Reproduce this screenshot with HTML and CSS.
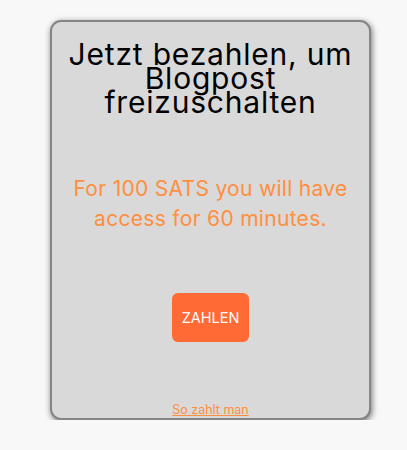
FILE: index.html
```html
<!DOCTYPE html>
<html lang="de">
<head>
<meta charset="utf-8">
<title>Paywall</title>
<link rel="stylesheet" href="styles.css">
</head>
<body>
  <div class="page">
    <div class="card">
      <h1 class="title">Jetzt bezahlen, um Blogpost freizuschalten</h1>
      <p class="offer">For 100 SATS you will have access for 60 minutes.</p>
      <button class="pay">ZAHLEN</button>
      <a class="howto" href="#">So zahlt man</a>
    </div>
  </div>
</body>
</html>
```

FILE: styles.css
```css
html, body {
  margin: 0;
  padding: 0;
  background: #f8f8f8;
}

.page {
  padding: 20px 0 0 50px;
}

.card {
  box-sizing: border-box;
  width: 321px;
  height: 400px;
  background: #d9d9d9;
  border: 2px solid #858585;
  border-radius: 11px;
  box-shadow: 1px 2px 6px rgba(0, 0, 0, 0.55);
  display: flex;
  flex-direction: column;
  align-items: center;
  text-align: center;
  padding: 0 8px;
}

.title {
  margin: 20px 0 0;
  font-family: "Inter", "Noto Sans", sans-serif;
  font-weight: 400;
  font-size: 30px;
  letter-spacing: 0.8px;
  line-height: 24px;
  color: #000;
}

.offer {
  margin: 60px 0 0;
  font-family: "Inter", "Noto Sans", sans-serif;
  font-size: 21px;
  letter-spacing: 0.3px;
  line-height: 30px;
  color: #ff8f40;
}

.pay {
  margin-top: 59px;
  width: 77px;
  height: 49px;
  border: none;
  border-radius: 6px;
  background: #ff6a35;
  color: #fff;
  font-family: "Inter", "Noto Sans", sans-serif;
  font-size: 14.5px;
  padding: 0;
}

.howto {
  margin-top: auto;
  margin-bottom: 0;
  font-family: "Inter", "Noto Sans", sans-serif;
  font-size: 12.5px;
  line-height: 16px;
  color: #ff8f40;
  text-decoration: underline;
}
```
